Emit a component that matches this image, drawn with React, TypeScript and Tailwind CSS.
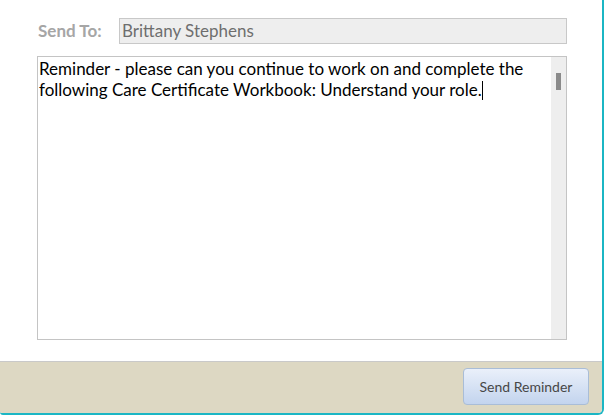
import React from 'react';

const font = { fontFamily: 'Lato, "Open Sans", sans-serif' };

export default function App() {
  return (
    <div className="w-[605px] h-[415px] bg-white" style={font}>
      <div className="w-[604px] h-[415px] flex flex-col bg-white border-r-2 border-b-2 border-[#1bb6c4] rounded-br-[6px] rounded-bl-[3px] overflow-hidden">
        {/* form */}
        <div className="flex-1 flex flex-col pl-[37px] pr-[35px] pt-[18px]">
          <div className="flex items-center h-[26px]">
            <span className="w-[82px] pl-px text-[17px] font-bold text-[#a6a6a6]">Send To:</span>
            <div className="flex-1 h-[26px] flex items-center px-[2px] bg-[#eeeeee] border border-[#c8c8c8] text-[17px] text-[#6e6e6e]">
              Brittany Stephens
            </div>
          </div>
          <div className="mt-[12px] h-[284px] flex border border-[#c4c4c4]">
            <div className="flex-1 pl-[1px] pt-[1px] text-[17px] leading-[21px] text-black">
              Reminder - please can you continue to work on and complete the following Care Certificate Workbook: Understand your role.
              <span className="inline-block w-px h-[19px] bg-black align-[-4px]" />
            </div>
            <div className="w-[15px] bg-[#eeeeee] flex justify-center pt-[16px]">
              <div className="w-[5px] h-[17px] bg-[#8a8a8a]" />
            </div>
          </div>
        </div>
        {/* footer */}
        <div className="h-[52px] border-t border-[#c9c9c9] bg-[#ddd8c3] flex items-start justify-end pt-[6px] pr-[13px]">
          <button className="w-[126px] h-[37px] rounded-[4px] border border-[#a9bdd7] bg-gradient-to-b from-[#eaf0fa] to-[#c3d4ee] text-[14px] text-[#474747]">
            Send Reminder
          </button>
        </div>
      </div>
    </div>
  );
}
